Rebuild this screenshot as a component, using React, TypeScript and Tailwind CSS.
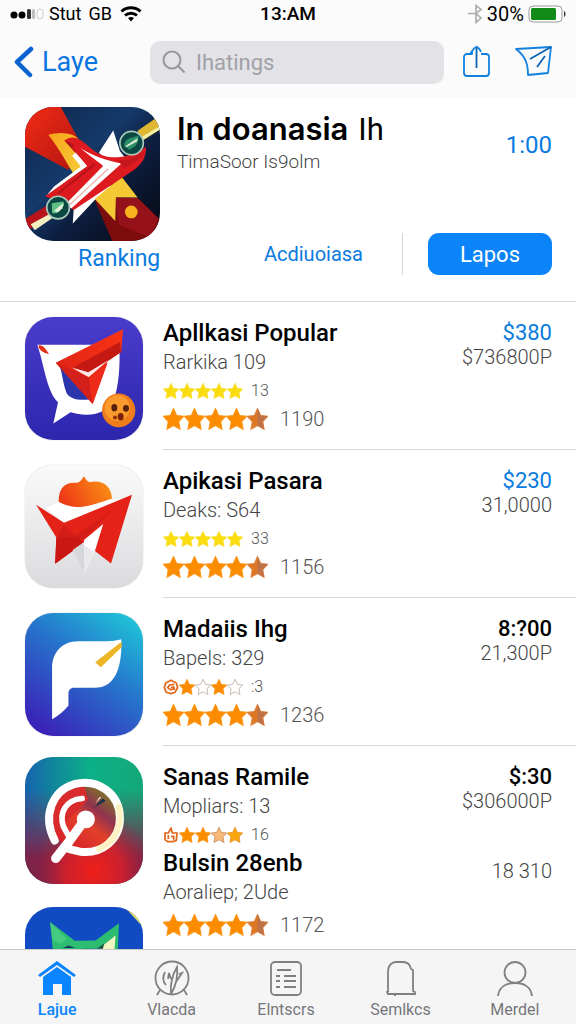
import React from 'react';

type StarKind = 'yellow' | 'orange' | 'half' | 'outline' | 'pale' | 'gold' | 'badge' | 'basket';

interface AppInfo {
  id: string;
  name: string;
  detail: string;
  stars: StarKind[];
  count: string;
  price: string;
  priceClass: string;
  amount: string;
  total?: string;
  art: React.ReactNode;
}

const STAR_PATH = 'M12 .5l3.600 7.600 8 .9-5.600 5.800 1.500 8.400L12 19.200l-7.500 4 1.500-8.400L.4 9l8-.9z';

const STAR_COLORS: Record<StarKind, { fill: string; stroke: string }> = {
  yellow: { fill: '#fbdc0e', stroke: '#f8e030' },
  orange: { fill: '#fb8c00', stroke: '#fd9412' },
  half: { fill: '#dc7724', stroke: '#de8340' },
  outline: { fill: '#ffffff', stroke: '#b9aaa0' },
  pale: { fill: '#f6b777', stroke: '#c98a55' },
  gold: { fill: '#fba70b', stroke: '#e58a1c' },
  badge: { fill: '#ffffff', stroke: '#e2681a' },
  basket: { fill: '#ffffff', stroke: '#e2681a' },
};

const Star: React.FC<{ kind: StarKind; className: string }> = ({ kind, className }) => {
  const { fill, stroke } = STAR_COLORS[kind];
  if (kind === 'badge') {
    return (
      <svg viewBox="0 0 24 24" className={className} fill={fill} stroke={stroke} strokeWidth="2.6">
        <path d="M12 2l8 4 2 7-4 7-6 2-7-2-3-7 2-7z" />
        <path d="M17 8l-7 1-3 4 4 3 6-1-1-3-4 1" fill="none" />
      </svg>
    );
  }
  if (kind === 'basket') {
    return (
      <svg viewBox="0 0 24 24" className={className} fill={fill} stroke={stroke} strokeWidth="2.6">
        <path d="M3 9h5l4-7 2 7h7l-1 11-5 2H7l-4-3z" />
        <path d="M8 12v6M12 14h4v5" fill="none" />
      </svg>
    );
  }
  return (
    <svg viewBox="0 0 24 24" preserveAspectRatio="none" className={className} stroke={stroke} strokeWidth="1.2">
      <path d={STAR_PATH} fill={fill} />
      {kind === 'half' && <path d="M12 .5l3.600 7.600 8 .9-5.600 5.800 1.500 8.400L12 19.200z" fill="#c07248" stroke="none" />}
    </svg>
  );
};

const HeroArt: React.FC = () => (
  <svg viewBox="47 37 404 401" preserveAspectRatio="none" className="h-full w-full">
    <defs>
      <linearGradient id="heroBg" x1="0" y1="0" x2="1" y2="1">
        <stop offset="0" stopColor="#0f2448" />
        <stop offset="0.4" stopColor="#153a6b" />
        <stop offset="0.6" stopColor="#0d1e3f" />
        <stop offset="1" stopColor="#05070f" />
      </linearGradient>
      <linearGradient id="heroRed" x1="0" y1="0" x2="1" y2="1">
        <stop offset="0" stopColor="#f02c16" />
        <stop offset="1" stopColor="#b01410" />
      </linearGradient>
      <linearGradient id="heroGold" x1="0" y1="0" x2="1" y2="1">
        <stop offset="0" stopColor="#f9a51a" />
        <stop offset="1" stopColor="#f4d03c" />
      </linearGradient>
    </defs>
    <rect x="47" y="37" width="404" height="401" fill="url(#heroBg)" />
    <path d="M47 37h107l46 84 30 50-54 54L47 156z" fill="url(#heroRed)" />
    <path d="M256 317l62-10 66 2 67 65v64H308z" fill="#7d0c0f" />
    <path d="M318 309l66 0 60 60-20 60-96-40z" fill="#96121a" />
    <circle cx="365" cy="351" r="19" fill="#f7b31c" />
    <path d="M47 372l68-42 16 30-69 42-15-10z" fill="#b8141c" />
    <path d="M64 388l62-34 14 8-64 44z" fill="#f3eec0" />
    <path d="M384 108l67-46v42l-58 38z" fill="#dfb631" />
    <path d="M396 127l55-33v10l-52 32z" fill="#f3eea8" />
    <path d="M268 174l43-67 20 62 24 30-60 2z" fill="#fff" />
    <path d="M117 121c24-9 64-8 82 5 12 10 18 20 24 40l-58-29 70 76-40 28c-24-36-44-78-78-120z" fill="url(#heroGold)" />
    <path d="M190 386l3-48 60-56 64-12-60 44z" fill="#fff" />
    <path d="M256 312l80-66 48 62-65-1-2 71z" fill="#f4c934" />
    <path d="M165 137c24-18 44-6 66 12 32 30 60 42 100 38 34-4 60-18 78-31 2 30-12 52-37 70L193 345l-40-24-44-16 124-91z" fill="#dc1a20" />
    <path d="M165 137c20 8 34 16 42 24l-6 14z" fill="#a3151a" />
    <path d="M228 217l6-4-36-40-10 10 26 32-80 60-22 26z" fill="#fff" />
    <path d="M228 215l-72 44-44 44z" fill="#fff" />
    <path d="M212 160c38 22 76 38 124 46L186 340l-20-10 114-116z" fill="#fff" />
    <path d="M196 150l84 62-128 104-44-13 126-88-48-60z" fill="#dc1a20" />
    <path d="M256 208l-110 88" fill="none" stroke="#b8131b" strokeWidth="6" />
    <path d="M296 222L180 330" fill="none" stroke="#efb3ae" strokeWidth="4" />
    <path d="M326 196c34 0 60-12 82-28-14 24-40 42-66 52z" fill="#c5161d" />
    <circle cx="366" cy="145" r="35" fill="#0b4743" stroke="#a8cabb" strokeWidth="5" />
    <path d="M344 153c0-24 23-24 43-31 1 23-9 35-29 43z" fill="#2a8f66" />
    <path d="M345 156l39-26-2 10-29 16z" fill="#dcebd2" />
    <circle cx="146" cy="338" r="34" fill="#0b4743" stroke="#a8cabb" strokeWidth="5" />
    <path d="M127 325l35-5 2 12-22 23h-14z" fill="#5cbf83" />
    <path d="M133 348l29-24-3 16-13 12z" fill="#e4f0d8" />
  </svg>
);

const PopularArt: React.FC = () => (
  <svg viewBox="47 40 354 365" preserveAspectRatio="none" className="h-full w-full">
    <defs>
      <linearGradient id="popBg" x1="0" y1="0" x2="0" y2="1">
        <stop offset="0" stopColor="#4a3ccb" />
        <stop offset="1" stopColor="#2c26ad" />
      </linearGradient>
      <linearGradient id="popRed" x1="0" y1="1" x2="1" y2="0">
        <stop offset="0" stopColor="#d91f16" />
        <stop offset="1" stopColor="#fa3416" />
      </linearGradient>
    </defs>
    <rect x="47" y="40" width="354" height="365" fill="url(#popBg)" />
    <path d="M84 122h246c3 62-2 126-17 165-22 42-76 52-129 36l-52 33 14-63C112 260 105 184 84 122z" fill="#fff" />
    <path d="M151 184l92 100c-31 5-64 0-72-20-9-22-11-50-20-80z" fill="#2b36ad" />
    <path d="M88 124c11-2 19 8 31 26-16-3-33-12-31-26z" fill="#e13218" />
    <path d="M139 176l202-100-5 68-42 28-44 126z" fill="url(#popRed)" />
    <path d="M187 192l145-78 3 30-97 64z" fill="#c41a13" />
    <path d="M187 190l50 14 60-36-59 51z" fill="#fff" opacity="0.9" />
    <path d="M139 176l99 43 12 79z" fill="#d3201a" />
    <path d="M238 219l57-43-45 122z" fill="#ee2b18" />
    <circle cx="328" cy="317" r="50" fill="#ef7d1c" />
    <circle cx="324" cy="310" r="38" fill="#fa9a2c" />
    <ellipse cx="315" cy="309" rx="9" ry="11" fill="#55200c" />
    <ellipse cx="350" cy="311" rx="9" ry="10" fill="#55200c" />
    <circle cx="317" cy="338" r="6" fill="#8c2f0d" />
    <ellipse cx="334" cy="336" rx="9" ry="11" fill="#7b220a" />
  </svg>
);

const PasarArt: React.FC = () => (
  <svg viewBox="47 27 354 372" preserveAspectRatio="none" className="h-full w-full">
    <defs>
      <linearGradient id="pasBg" x1="0" y1="0" x2="0" y2="1">
        <stop offset="0" stopColor="#fafafa" />
        <stop offset="1" stopColor="#dadbdd" />
      </linearGradient>
      <linearGradient id="pasTop" x1="0" y1="0.5" x2="1" y2="0.2">
        <stop offset="0" stopColor="#ee3b17" />
        <stop offset="1" stopColor="#fb9312" />
      </linearGradient>
    </defs>
    <rect x="47" y="27" width="354" height="372" fill="url(#pasBg)" />
    <path d="M110 158l38-20 60 20 100-28 30 0-170 74z" fill="#fff" />
    <path d="M148 138c0-42 18-61 56-57 10-3 15-13 20-20 5 9 8 15 18 18 38-8 64 12 66 50-46 12-100 44-160 9z" fill="url(#pasTop)" />
    <path d="M80 147l84 55 204-85-63 208-48-38 24-81-57 56-86 64 3-80z" fill="#e52218" />
    <path d="M141 246l60-6 22 22-86 64z" fill="#cb1713" />
    <path d="M163 206l36 34 110-78-86 90-22-8-60 2z" fill="#d31d16" />
    <path d="M224 254l57-48-23 72-33 80z" fill="#fff" />
    <path d="M225 270l27 18-27 71z" fill="#e9e9ec" />
    <path d="M190 284l34-24 1 94z" fill="#d6d7da" />
  </svg>
);

const MadaArt: React.FC = () => (
  <svg viewBox="47 36 353 367" preserveAspectRatio="none" className="h-full w-full">
    <defs>
      <linearGradient id="madBg" x1="0.9" y1="0" x2="0.2" y2="1">
        <stop offset="0" stopColor="#1fc6d8" />
        <stop offset="0.45" stopColor="#2674cc" />
        <stop offset="1" stopColor="#3b22b8" />
      </linearGradient>
    </defs>
    <rect x="47" y="36" width="353" height="367" fill="url(#madBg)" />
    <path d="M128 353V200c0-47 31-80 78-80h72c24 0 40-1 57-6 3 83-17 145-80 145h-61c-12 0-17 7-17 18v35c-13 17-31 31-49 41z" fill="#fff" />
    <path d="M257 183l73-57 6-3v15l-62 60z" fill="#ecb526" />
  </svg>
);

const SanasArt: React.FC = () => (
  <svg viewBox="47 22 353 383" preserveAspectRatio="none" className="h-full w-full">
    <defs>
      <linearGradient id="sanBg" x1="0" y1="0" x2="1" y2="0">
        <stop offset="0" stopColor="#1564ae" />
        <stop offset="0.55" stopColor="#0cb087" />
        <stop offset="1" stopColor="#15a878" />
      </linearGradient>
      <linearGradient id="sanFade" x1="0" y1="0" x2="0" y2="1">
        <stop offset="0.25" stopColor="#7a2a52" stopOpacity="0" />
        <stop offset="0.8" stopColor="#7e2248" />
      </linearGradient>
      <radialGradient id="sanRed" cx="0.58" cy="0.9" r="0.5">
        <stop offset="0" stopColor="#f02019" />
        <stop offset="0.5" stopColor="#d8202a" stopOpacity="0.85" />
        <stop offset="1" stopColor="#a01f3c" stopOpacity="0" />
      </radialGradient>
      <linearGradient id="sanDisc" x1="0.2" y1="0.9" x2="0.85" y2="0.1">
        <stop offset="0" stopColor="#d8202a" />
        <stop offset="0.45" stopColor="#e2402a" />
        <stop offset="0.7" stopColor="#8f3350" />
        <stop offset="1" stopColor="#7d7a28" />
      </linearGradient>
    </defs>
    <rect x="47" y="22" width="353" height="383" fill="url(#sanBg)" />
    <rect x="47" y="22" width="353" height="383" fill="url(#sanFade)" />
    <rect x="47" y="22" width="353" height="383" fill="url(#sanRed)" />
    <circle cx="225" cy="207" r="100" fill="url(#sanDisc)" />
    <path d="M130 207a95 95 0 0 1 95-95l10 40-60 60-30 50z" fill="#d92a2c" />
    <path d="M280 147l8 8-36 20z" fill="#17324c" />
    <path d="M257 163l12-19 7-2z" fill="#fff" />
    <path d="M136 274c-38-74-8-150 58-170 74-20 137 32 137 103 0 64-54 108-117 101l-34-8" fill="none" stroke="#fff" strokeWidth="24" strokeLinecap="round" />
    <path d="M326 165c18 70-16 122-65 137" fill="none" stroke="#fdf2c4" strokeWidth="18" />
    <path d="M218 147c-50 4-70 44-56 85l14 26" fill="none" stroke="#fff" strokeWidth="17" strokeLinecap="round" />
    <path d="M227 210l-52 72-36 46" fill="none" stroke="#fff" strokeWidth="28" strokeLinecap="round" />
    <circle cx="229" cy="210" r="27" fill="#fff" />
  </svg>
);

const BulsinArt: React.FC = () => (
  <svg viewBox="47 474 353 383" preserveAspectRatio="none" className="h-full w-full">
    <rect x="47" y="474" width="353" height="383" fill="#104bc4" />
    <path d="M345 474h55v60z" fill="#ece55a" />
    <path d="M122 519l74 57 62-1 70-52-4 100-44 60H170l-38-60z" fill="#2dbd70" />
    <path d="M122 519l50 52-20 14-22-12z" fill="#45cc80" />
    <path d="M160 598l17-8 20 8z" fill="#173b66" />
    <path d="M268 600l50-40-4 50-30 10z" fill="#f1f5c2" />
    <path d="M262 600l22-16-4 16z" fill="#14523f" />
    <path d="M217 600h60l-20 12h-30z" fill="#164ba9" />
  </svg>
);

const APPS: AppInfo[] = [
  {
    id: 'popular', name: 'Apllkasi Popular', detail: 'Rarkika 109',
    stars: ['yellow', 'yellow', 'yellow', 'yellow', 'yellow'], count: '13',
    price: '$380', priceClass: 'text-[#0a7be0]', amount: '$736800P', total: '1190', art: <PopularArt />,
  },
  {
    id: 'pasar', name: 'Apikasi Pasara', detail: 'Deaks: S64',
    stars: ['yellow', 'yellow', 'yellow', 'yellow', 'yellow'], count: '33',
    price: '$230', priceClass: 'text-[#0a7be0]', amount: '31,0000', total: '1156', art: <PasarArt />,
  },
  {
    id: 'mada', name: 'Madaiis Ihg', detail: 'Bapels: 329',
    stars: ['badge', 'orange', 'outline', 'orange', 'outline'], count: ':3',
    price: '8:?00', priceClass: 'font-medium text-black', amount: '21,300P', total: '1236', art: <MadaArt />,
  },
  {
    id: 'sanas', name: 'Sanas Ramile', detail: 'Mopliars: 13',
    stars: ['basket', 'orange', 'orange', 'pale', 'gold'], count: '16',
    price: '$:30', priceClass: 'font-medium text-black', amount: '$306000P', art: <SanasArt />,
  },
];

const TotalRating: React.FC<{ total: string }> = ({ total }) => (
  <div className="flex h-7 items-center">
    {(['orange', 'orange', 'orange', 'orange', 'half'] as StarKind[]).map((kind, i) => (
      <Star key={i} kind={kind} className="h-[22px] w-[21px]" />
    ))}
    <span className="ml-3 text-xl font-light text-[#555]">{total}</span>
  </div>
);

const AppSummary: React.FC<{ app: AppInfo }> = ({ app }) => (
  <div className="flex justify-between pr-6">
    <div>
      <h2 className="text-2xl leading-7 font-medium">{app.name}</h2>
      <p className="text-xl leading-[30px] font-light text-[#444]">{app.detail}</p>
      <div className="flex h-7 items-center">
        {app.stars.map((kind, i) => (
          <Star key={i} kind={kind} className="h-4 w-4" />
        ))}
        <span className="ml-2 text-base font-light text-[#555]">{app.count}</span>
      </div>
      {app.total && <TotalRating total={app.total} />}
    </div>
    <div className="text-right">
      <p className={`text-[22px] leading-7 ${app.priceClass}`}>{app.price}</p>
      <p className="text-xl leading-5 font-light text-[#444]">{app.amount}</p>
    </div>
  </div>
);

const StatusBar: React.FC = () => (
  <div className="grid h-[26px] grid-cols-[1fr_auto_1fr] items-center pr-2.5 pl-2.5 text-xl">
    <div className="flex items-center">
      <svg viewBox="0 0 34 14" className="h-3.5 w-[34px]">
        <circle cx="4" cy="8" r="3.5" />
        <circle cx="12" cy="8" r="3.5" />
        <rect x="17" y="2" width="4" height="10" rx="1.5" fill="#333" />
        <rect x="22" y="2" width="3" height="10" rx="1.5" fill="#bbb" />
        <rect x="27" y="2" width="6" height="10" rx="3" fill="none" stroke="#ccc" />
      </svg>
      <span className="ml-[5px] text-lg">Stut</span>
      <span className="ml-[7px] text-lg">GB</span>
      <svg viewBox="0 0 22 16" className="ml-2 h-4 w-[22px]" fill="none" stroke="#000" strokeWidth="3">
        <path d="M1.5 5.5a14 14 0 0 1 19 0M5 9.5a9 9 0 0 1 12 0" />
        <path d="M11 15.500l-3-3.500a5 5 0 0 1 6 0z" fill="#000" stroke="none" />
      </svg>
    </div>
    <span className="text-[19px] font-medium">13:AM</span>
    <div className="flex items-center justify-end">
      <svg viewBox="0 0 16 20" className="h-5 w-4" fill="none" stroke="#aaa" strokeWidth="1.6">
        <path d="M1 9.500h8M9 9.500l5-4-5-4v17l5-4.500-5-4.500" />
      </svg>
      <span className="mx-1">30%</span>
      <svg viewBox="0 0 38 18" className="h-[18px] w-[38px]">
        <rect x="1" y="1" width="33" height="16" rx="4" fill="#fff" stroke="#999" />
        <rect x="3" y="3" width="25" height="12" rx="1.500" fill="#128a18" />
        <path d="M36 6c2 1 2 5 0 6z" fill="#333" />
      </svg>
    </div>
  </div>
);

const TABS = [
  {
    id: 'home', label: 'Lajue',
    icon: (
      <g fill="#0a84ff" stroke="none">
        <path d="M19 1l19 14-2 2L19 5 2 17l-2-2z" />
        <path d="M19 7l14 10v18h-9V24h-9v11H5V17z" />
      </g>
    ),
  },
  {
    id: 'media', label: 'Vlacda',
    icon: (
      <>
        <circle cx="19" cy="18" r="16.500" />
        <path d="M7 30l-3 5M31 30l3 5M12 12c-3 6-2 10 1 13M15 19l1-6 2 6M18 34c-1-8 1-19 6-27 1 9 0 17-6 27M23 22l6-9-3 1" />
      </>
    ),
  },
  {
    id: 'lists', label: 'Elntscrs',
    icon: (
      <>
        <rect x="4" y="2" width="30" height="33" rx="4" />
        <path d="M9 16h4M9 21h4M9 27h4M10 10h14M17 16h12M17 21h12M17 27h12" />
      </>
    ),
  },
  {
    id: 'alerts', label: 'Semlkcs',
    icon: (
      <path d="M7 32V12C7 5 11 2 15 2h7c4 0 7 2 8 7l2 1v21l2 1v2H7l-1-2 2-1M14 34v2M31 34v1" />
    ),
  },
  {
    id: 'account', label: 'Merdel',
    icon: (
      <>
        <circle cx="19" cy="12.500" r="10.500" />
        <path d="M2 36c1-9 8-13 17-13s16 4 17 13" />
      </>
    ),
  },
];

const App: React.FC = () => {
  return (
    <div className="flex h-screen flex-col bg-white font-[Roboto,sans-serif] text-black">
      <header className="bg-[#fbfbfb]">
        <StatusBar />
        <nav className="flex h-[72px] items-center pr-6 pl-3.5">
          <a href="#back" className="flex w-[136px] items-center text-[27px] text-[#0a74e0]">
            <svg viewBox="0 0 20 32" className="mr-2 h-8 w-5" fill="none" stroke="#0b62d2" strokeWidth="4.500" strokeLinecap="round" strokeLinejoin="round">
              <path d="M17 3L3 16l13 13" />
            </svg>
            Laye
          </a>
          <label className="flex h-[43px] min-w-0 flex-1 items-center rounded-[10px] bg-[#e3e3e7] pl-3">
            <svg viewBox="0 0 24 24" className="h-6 w-6 shrink-0" fill="none" stroke="#96969b" strokeWidth="2">
              <circle cx="10" cy="10" r="8.500" />
              <path d="M16 16l6.500 6.500" />
            </svg>
            <input
              type="search"
              aria-label="Search"
              placeholder="Ihatings"
              className="ml-2.5 w-full min-w-0 bg-transparent text-[22px] outline-none placeholder:text-[#a0a0a6]"
            />
          </label>
          <button aria-label="Share" className="ml-[18px]">
            <svg viewBox="0 0 28 34" className="h-[34px] w-7" fill="none" stroke="#1280dd" strokeWidth="1.800" strokeLinejoin="round">
              <path d="M10 6v3H5a3 3 0 0 0-3 3v16a3 3 0 0 0 3 3h19a3 3 0 0 0 3-3V12a3 3 0 0 0-3-3h-5M8 8c2 0 3-5 6-6 3 0 4 3 5 5" />
              <path d="M14.500 3v20" stroke="#0b63b4" />
            </svg>
          </button>
          <button aria-label="Send" className="ml-6">
            <svg viewBox="0 0 38 34" className="h-[34px] w-[38px]" fill="none" stroke="#1280dd" strokeWidth="1.800" strokeLinejoin="round">
              <path d="M2 4l35-2-3 26-20 2c0-12-3-19-12-26z" />
              <path d="M37 2L16 14M31 11l-8 11" stroke="#0b63b4" />
            </svg>
          </button>
        </nav>
      </header>

      <main className="min-h-0 flex-1 overflow-hidden">
        <section className="border-b border-[#d9d9dc] pt-[9px] pr-6 pb-[26px] pl-[25px]">
          <div className="flex">
            <div className="h-[134px] w-[135px] shrink-0 overflow-hidden rounded-[28px]">
              <HeroArt />
            </div>
            <div className="ml-[17px] flex-1 pt-1">
              <h1 className="font-[Inter,sans-serif] text-[31px] leading-9 font-semibold">
                In doanasia <span className="ml-0.5 font-[Roboto,sans-serif] font-normal">Ih</span>
              </h1>
              <p className="text-[19px] leading-7 font-light text-[#444]">TimaSoor Is9olm</p>
            </div>
            <span className="pt-6 text-2xl leading-7 text-[#0a7be0]">1:00</span>
          </div>
          <div className="-mt-2 flex items-center">
            <a href="#ranking" className="ml-[53px] pt-2.5 text-[23px] leading-8 text-[#0a7be0]">Ranking</a>
            <a href="#detail" className="ml-auto text-xl text-[#0a7be0]">Acdiuoiasa</a>
            <span className="mx-[25px] ml-[39px] h-[42px] w-px bg-[#d6d6d8]" />
            <button className="h-[42px] w-[124px] rounded-[11px] bg-[#0a84f8] text-[22px] text-white">Lapos</button>
          </div>
        </section>

        {APPS.map(app => (
          <article key={app.id} className="flex gap-5 pl-[25px]">
            {app.total ? (
              <div className="mt-[15px] h-[123px] w-[118px] shrink-0 overflow-hidden rounded-[28px] shadow-[0_0_1px_#999]">
                {app.art}
              </div>
            ) : (
              <div className="mt-[11px] flex w-[118px] shrink-0 flex-col gap-[23px]">
                <div className="h-[127px] overflow-hidden rounded-[28px]">{app.art}</div>
                <div className="h-[127px] overflow-hidden rounded-[28px]">
                  <BulsinArt />
                </div>
              </div>
            )}
            <div className={`flex-1 pt-[17px] pb-4 ${app.total ? 'border-b border-[#d9d9dc]' : ''}`}>
              <AppSummary app={app} />
              {!app.total && (
                <div className="flex justify-between pr-6">
                  <div>
                    <h2 className="text-2xl leading-7 font-medium">Bulsin 28enb</h2>
                    <p className="mb-1 text-xl leading-[30px] font-light text-[#444]">Aoraliep; 2Ude</p>
                    <TotalRating total="1172" />
                  </div>
                  <p className="pt-2 text-xl leading-7 font-light text-[#444]">18 310</p>
                </div>
              )}
            </div>
          </article>
        ))}
      </main>

      <nav className="grid h-[75px] shrink-0 grid-cols-5 border-t border-[#c9c9cc] bg-[#f5f5f6] pr-1">
        {TABS.map(tab => (
          <button
            key={tab.id}
            className={`flex flex-col items-center pt-2.5 text-base leading-5 ${
              tab.id === 'home' ? 'font-medium text-[#0a84ff]' : 'text-[#77777b]'
            }`}
          >
            <svg viewBox="0 0 38 38" className="mb-0.5 h-[38px] w-[38px]" fill="none" stroke="#808084" strokeWidth="1.800">
              {tab.icon}
            </svg>
            {tab.label}
          </button>
        ))}
      </nav>
    </div>
  );
};

export default App;
